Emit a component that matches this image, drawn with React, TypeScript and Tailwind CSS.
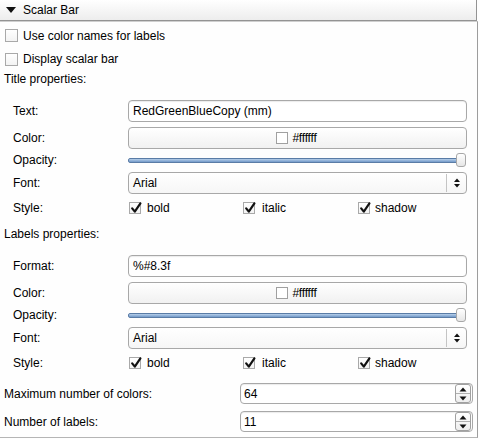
import React from 'react';

function CheckMark() {
  return (
    <svg viewBox="0 0 12 12" className="absolute left-[0px] top-[-1px] w-[12px] h-[12px]">
      <path d="M2.2 6.4 L4.8 9.6 L10.4 1.4" fill="none" stroke="#111" strokeWidth="2.2" strokeLinecap="round" strokeLinejoin="round" />
    </svg>
  );
}

function Box({ checked, big }: { checked?: boolean; big?: boolean }) {
  return (
    <span
      className={
        big
          ? 'relative inline-block w-[13px] h-[13px] shrink-0 border border-[#a9a9a9] bg-gradient-to-b from-white to-[#f3f3f3]'
          : 'relative inline-block w-[12px] h-[12px] shrink-0 border border-[#a9a9a9] bg-gradient-to-b from-white to-[#f3f3f3]'
      }
    >
      {checked && <CheckMark />}
    </span>
  );
}

function UpDown() {
  return (
    <svg viewBox="0 0 8 12" className="w-[8px] h-[12px]">
      <path d="M1 5 L4 1.5 L7 5 Z" fill="#111" />
      <path d="M1 7 L4 10.5 L7 7 Z" fill="#111" />
    </svg>
  );
}

function Label({ children }: { children: React.ReactNode }) {
  return <span className="w-[128px] pl-[13px] shrink-0">{children}</span>;
}

function TextField({ value }: { value: string }) {
  return (
    <div className="w-[339px] h-[22px] flex items-center pl-[4px] rounded-[4px] border border-[#a8a8a8] bg-white shadow-[inset_0_1px_1px_rgba(0,0,0,0.08)]">
      {value}
    </div>
  );
}

function ColorButton() {
  return (
    <div className="w-[339px] h-[22px] flex items-center justify-center gap-[4px] rounded-[4px] border border-[#a8a8a8] bg-gradient-to-b from-white to-[#f1f1f1]">
      <span className="w-[12px] h-[12px] border border-[#a0a0a0] bg-white" />
      <span className="text-[12px] tracking-[-0.2px] pr-[2px]">#ffffff</span>
    </div>
  );
}

function Slider() {
  return (
    <div className="relative w-[339px] h-[14px] flex items-center">
      <div className="w-[333px] h-[5px] rounded-[2px] border border-[#5a7ca6] bg-gradient-to-b from-[#b6cfea] to-[#7399c8]" />
      <div className="absolute right-[1px] top-0 w-[10px] h-[14px] rounded-[3px] border border-[#a8a8a8] bg-gradient-to-b from-white to-[#e6e6e6]" />
    </div>
  );
}

function Select({ value }: { value: string }) {
  return (
    <div className="w-[339px] h-[22px] flex items-center rounded-[4px] border border-[#a8a8a8] bg-gradient-to-b from-white to-[#f6f6f6]">
      <span className="flex-1 pl-[4px]">{value}</span>
      <span className="w-px h-[18px] bg-[#c4c4c4]" />
      <span className="w-[19px] flex items-center justify-center">
        <UpDown />
      </span>
    </div>
  );
}

function StyleRow() {
  return (
    <div className="flex items-center h-[22px]">
      <Label>Style:</Label>
      <div className="flex items-center">
        <div className="w-[115px] pl-[1px] flex items-center gap-[6px]">
          <Box checked />
          <span>bold</span>
        </div>
        <div className="w-[115px] flex items-center gap-[7px]">
          <Box checked />
          <span>italic</span>
        </div>
        <div className="flex items-center gap-[5px]">
          <Box checked />
          <span>shadow</span>
        </div>
      </div>
    </div>
  );
}

function PropsGroup({ title, first, firstValue }: { title: string; first: string; firstValue: string }) {
  return (
    <div className="flex flex-col pb-[5px]">
      <div className="h-[20px] flex items-center pl-[4px]">{title}</div>
      <div className="h-[8px]" />
      <div className="flex items-center h-[28px]">
        <Label>{first}</Label>
        <TextField value={firstValue} />
      </div>
      <div className="flex items-center h-[26px]">
        <Label>Color:</Label>
        <ColorButton />
      </div>
      <div className="flex items-center h-[18px]">
        <Label>Opacity:</Label>
        <Slider />
      </div>
      <div className="flex items-center h-[28px]">
        <Label>Font:</Label>
        <Select value="Arial" />
      </div>
      <StyleRow />
    </div>
  );
}

function SpinBox({ value }: { value: string }) {
  return (
    <div className="w-[233px] h-[21px] flex items-center rounded-[4px] border border-[#a8a8a8] bg-white shadow-[inset_0_1px_1px_rgba(0,0,0,0.08)]">
      <span className="flex-1 pl-[3px]">{value}</span>
      <div className="w-[16px] h-[19px] mr-[1px] flex flex-col rounded-[3px] border border-[#a0a0a0] bg-gradient-to-b from-white to-[#eeeeee]">
        <div className="flex-1 flex items-center justify-center border-b border-[#b0b0b0]">
          <svg viewBox="0 0 8 5" className="w-[8px] h-[5px]">
            <path d="M0.5 4.5 L4 0.5 L7.5 4.5 Z" fill="#111" />
          </svg>
        </div>
        <div className="flex-1 flex items-center justify-center">
          <svg viewBox="0 0 8 5" className="w-[8px] h-[5px]">
            <path d="M0.5 0.5 L4 4.5 L7.5 0.5 Z" fill="#111" />
          </svg>
        </div>
      </div>
    </div>
  );
}

export default function App() {
  return (
    <div className="w-[479px] h-[439px] bg-[#fefefe] text-[12px] text-black font-['Liberation_Sans',Arial,sans-serif] overflow-hidden">
      <div className="w-[477px] h-[21px] flex items-center pl-[6px] gap-[7px] border-b border-r border-[#939393] bg-gradient-to-b from-white to-[#ededed]">
        <svg viewBox="0 0 10 6" className="w-[10px] h-[6px]">
          <path d="M0 0 L10 0 L5 6 Z" fill="#111" />
        </svg>
        <span>Scalar Bar</span>
      </div>
      <div className="w-[478px] h-[417px] border-t border-r border-b border-t-[#cfcfcf] border-r-[#9d9d9d] border-b-[#b5b5b5] flex flex-col">
        <div className="h-[27px] flex items-center pl-[5px] gap-[5px]">
          <Box big />
          <span>Use color names for labels</span>
        </div>
        <div className="h-[20px] flex items-center pl-[5px] gap-[5px]">
          <Box big />
          <span>Display scalar bar</span>
        </div>
        <PropsGroup title="Title properties:" first="Text:" firstValue="RedGreenBlueCopy (mm)" />
        <PropsGroup title="Labels properties:" first="Format:" firstValue="%#8.3f" />
        <div className="h-[4px]" />
        <div className="flex items-center h-[21px]">
          <span className="w-[240px] pl-[4px]">Maximum number of colors:</span>
          <SpinBox value="64" />
        </div>
        <div className="h-[7px]" />
        <div className="flex items-center h-[21px]">
          <span className="w-[240px] pl-[4px]">Number of labels:</span>
          <SpinBox value="11" />
        </div>
      </div>
    </div>
  );
}
